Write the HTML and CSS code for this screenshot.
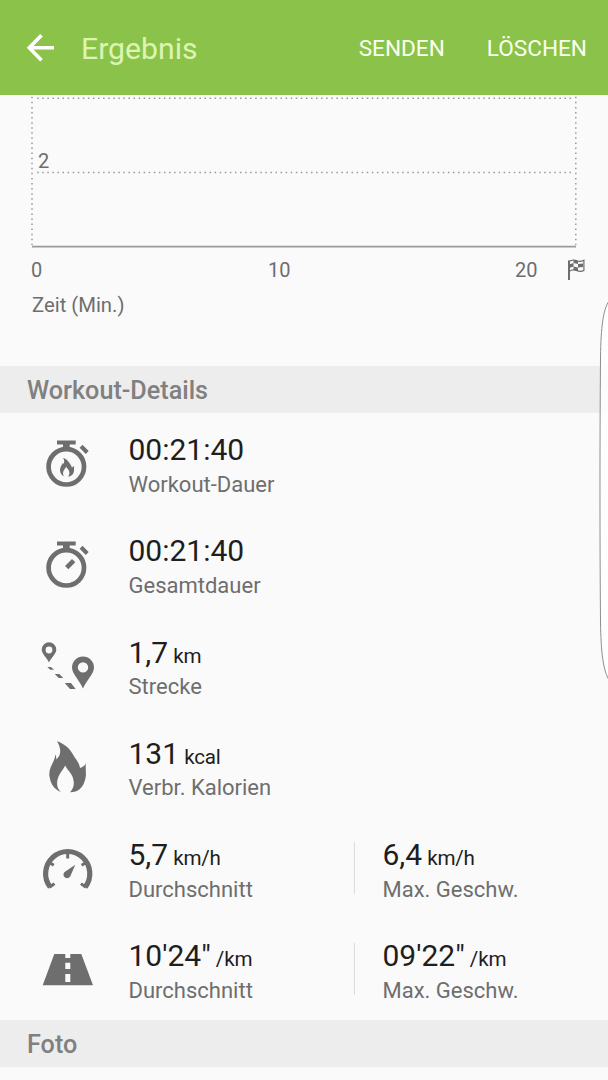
FILE: index.html
```html
<!DOCTYPE html>
<html lang="de">
<head>
	<meta charset="utf-8">
	<title>Ergebnis</title>
	<link rel="stylesheet" href="styles.css">
</head>
<body>
<div class="page">
	<header class="header">
		<svg class="back" width="28" height="28" viewBox="0 0 28 28">
			<path d="M14.5 1.2L2.3 13.7l12.2 12.5M2.5 13.7H27" />
		</svg>
		<h1>Ergebnis</h1>
		<a class="send">SENDEN</a>
		<a class="delete">LÖSCHEN</a>
	</header>

	<!-- Diagramm -->
	<div class="chart">
		<div class="plot">
			<svg width="548" height="153" viewBox="0 0 548 153">
				<path class="dots" d="M7.2 3.3H542M7.2 77.5H542" />
				<path class="dots" d="M2 1.8V150M545.8 1.8V150" />
				<path class="axis" d="M2 151.6H546" />
			</svg>
			<span class="value">2</span>
		</div>
		<div class="ticks">
			<span>0</span>
			<span>10</span>
			<span>20</span>
			<svg class="flag" width="18" height="22" viewBox="0 0 18 22">
				<path class="pole" d="M2 1.5V21" />
				<path class="cloth" d="M2 2.6C5 .4 8 1 10 1.8S14 2.8 16.9 1.2V11.4C14 13 12 12.4 10 11.6S5 10.4 2 12.4" />
				<path d="M6.5 1.2L11 2v3l-4.5-1zM2 5.5l4.5-1.4v3.4L2 9zM11 5l5-.5v3.6L11 8.5zM6.5 7.5L11 8.5v3.4l-4.5-1z" />
			</svg>
		</div>
		<p class="unit">Zeit (Min.)</p>
	</div>

	<h2>Workout-Details</h2>
	<ul class="details">
		<li>
			<svg class="icon" viewBox="0 0 60 60">
				<circle class="ring" cx="28.3" cy="29.8" r="17.7" />
				<path d="M19 3.5h18.7v4h-6V12H25V7.5h-6zM44.5 7.8l6.2 6.2-2.9 2.9-6.2-6.2z" />
				<path transform="translate(17.65 20.3) scale(.385 .367)" d="M19 1.3C27 4 32 9 35 14.5C38 20 41 22 42 27.9Q46 27 48 23.3C47 29 49 34 47 40C45 48 40 52 32 52.3C36 48 37 43 34.3 36.3C32 31 29 30 27.3 25.6C25 30 22 33 20.3 37C18 43 19 49 23 52C15 49 12 42 11.3 35C11 26 17 22 17.3 14.6Q18.7 17 18 19.6C24 15 23 8 19 1.3z" />
			</svg>
			<div class="item">
				<strong>00:21:40</strong>
				<span>Workout-Dauer</span>
			</div>
		</li>
		<li>
			<svg class="icon" viewBox="0 0 60 60">
				<circle class="ring" cx="28.3" cy="29.8" r="17.7" />
				<path d="M19 3.5h18.7v4h-6V12H25V7.5h-6zM44.5 7.8l6.2 6.2-2.9 2.9-6.2-6.2zM34 21l3.3 3.3-7 7-3.3-3.3z" />
			</svg>
			<div class="item">
				<strong>00:21:40</strong>
				<span>Gesamtdauer</span>
			</div>
		</li>
		<li>
			<svg class="icon" viewBox="0 0 60 60">
				<path fill-rule="evenodd" d="M11 23.6C9 19 3.7 15 3.7 10.6a7.3 7.3 0 0 1 14.6 0C18.3 15 13 19 11 23.6zM11 7.6a3.4 3.4 0 1 0 0 6.8a3.4 3.4 0 1 0 0-6.8z" />
				<path fill-rule="evenodd" d="M45 49.6C42 42 34 35 34 28.6a11 11 0 0 1 22 0C56 35 48 42 45 49.6zM45 23.2a5.2 5.2 0 1 0 0 10.4a5.2 5.2 0 1 0 0-10.4z" />
				<path d="M9.3 27.9H13l3 2.8h-3.7zM16.7 34.9h4.6l4 4h-4.6zM26.7 43.9H33l4.7 6H32z" />
			</svg>
			<div class="item">
				<strong>1,7 <small>km</small></strong>
				<span>Strecke</span>
			</div>
		</li>
		<li>
			<svg class="icon" viewBox="0 0 60 60">
				<path d="M19 1.3C27 4 32 9 35 14.5C38 20 41 22 42 27.9Q46 27 48 23.3C47 29 49 34 47 40C45 48 40 52 32 52.3C36 48 37 43 34.3 36.3C32 31 29 30 27.3 25.6C25 30 22 33 20.3 37C18 43 19 49 23 52C15 49 12 42 11.3 35C11 26 17 22 17.3 14.6Q18.7 17 18 19.6C24 15 23 8 19 1.3z" />
			</svg>
			<div class="item">
				<strong>131 <small>kcal</small></strong>
				<span>Verbr. Kalorien</span>
			</div>
		</li>
		<li>
			<svg class="icon" viewBox="0 0 60 60">
				<path class="arc" d="M12.2 45.1A22.1 22.1 0 1 1 47.2 45.1" />
				<path class="mark" d="M29.7 11v5.5M12.5 21.2l3.3 2M46.9 21.2l-3.3 2M11.5 45.2l5-3.6M47.9 45.2l-5-3.6" />
				<path d="M37.3 22.7L32.4 34A3.6 3.6 0 1 1 26.6 30z" />
			</svg>
			<div class="item">
				<strong>5,7 <small>km/h</small></strong>
				<span>Durchschnitt</span>
			</div>
			<div class="item max">
				<strong>6,4 <small>km/h</small></strong>
				<span>Max. Geschw.</span>
			</div>
		</li>
		<li>
			<svg class="icon" viewBox="0 0 60 60">
				<path fill-rule="evenodd" d="M16.3 11h11v4h5v-4h11L55 42.3H4.7zM27.3 19.7v6.3h5v-6.3zM27.3 31v8h5v-8z" />
			</svg>
			<div class="item">
				<strong>10'24" <small>/km</small></strong>
				<span>Durchschnitt</span>
			</div>
			<div class="item max">
				<strong>09'22" <small>/km</small></strong>
				<span>Max. Geschw.</span>
			</div>
		</li>
	</ul>
	<h2>Foto</h2>

	<!-- Griff am rechten Rand, liegt über dem Inhalt -->
	<svg class="edge" width="10" height="384" viewBox="0 0 10 384">
		<path d="M11 4C5 13 3 30 2.5 60C1.8 150 1.8 240 2.5 325C3 355 5 373 11 383" />
	</svg>
</div>
</body>
</html>
```
FILE: styles.css
```css
* {
	margin: 0;
	padding: 0;
	box-sizing: border-box;
}
body {
	background-color: #fafafa;
	font-family: Roboto, "Liberation Sans", sans-serif;
	color: #6e6e6e;
}
.page {
	position: relative;
	width: 608px;
	height: 1080px;
	overflow: hidden;
}
.header {
	display: flex;
	align-items: center;
	height: 95px;
	padding: 0 21px 0 27px;
	background-color: #8bc34a;
	color: #fafff0;
}
.back {
	fill: none;
	stroke: #fff;
	stroke-width: 3.6;
}
.header h1 {
	flex: 1;
	padding: 2px 0 0 26px;
	font-size: 30.2px;
	font-weight: 400;
	color: #dcf5b5;
}
.header a {
	padding-top: 2px;
	font-size: 22.6px;
}
.header .delete {
	margin-left: 42px;
}
.chart {
	height: 270.5px;
	padding-left: 30px;
}
.plot {
	position: relative;
	height: 153px;
}
.plot svg {
	display: block;
}
.dots {
	fill: none;
	stroke: #999;
	stroke-width: 1.5;
	stroke-dasharray: 1.5 3.57;
}
.axis {
	stroke: #999;
	stroke-width: 1.8;
}
.value {
	position: absolute;
	left: 8px;
	top: 54px;
	font-size: 20px;
	line-height: 24px;
}
.ticks {
	display: grid;
	grid-template-columns: 237px 247px 52px 18px;
	align-items: center;
	height: 44px;
	padding-left: 1px;
	font-size: 20px;
}
.flag {
	fill: #6e6e6e;
}
.flag .pole,
.flag .cloth {
	fill: none;
	stroke: #6e6e6e;
	stroke-width: 1.2;
}
.flag .pole {
	stroke-width: 2;
}
.unit {
	padding-left: 2px;
	font-size: 20.3px;
	line-height: 27px;
}
h2 {
	height: 47px;
	padding-left: 27px;
	background-color: #ededed;
	font-size: 25.2px;
	font-weight: 500;
	line-height: 50px;
	color: #808080;
}
.details {
	list-style: none;
}
.details li {
	display: flex;
	height: 101.27px;
	padding: 24px 0 0 38px;
}
.icon {
	width: 60px;
	height: 60px;
	margin-right: 30.5px;
	fill: #6e6e6e;
}
.ring,
.arc,
.mark {
	fill: none;
	stroke: #6e6e6e;
	stroke-width: 4.7;
}
.arc {
	stroke-width: 5.2;
}
.mark {
	stroke-width: 3;
}
.item {
	width: 225.5px;
	height: 52px;
}
.item strong {
	display: block;
	height: 30px;
	margin-top: -4.5px;
	font-size: 30px;
	font-weight: 400;
	line-height: 36px;
	color: #1e1e1e;
}
.item small {
	margin-left: -2.4px;
	font-size: 20.6px;
	letter-spacing: -.2px;
}
.item span {
	display: block;
	padding-top: 8.5px;
	font-size: 22px;
	line-height: 28px;
}
.item.max {
	padding-left: 27.5px;
	border-left: 1px solid #dcdcdc;
}
.edge {
	position: absolute;
	right: 0;
	top: 297px;
	fill: rgba(255, 255, 255, .8);
	stroke: #8e8e8e;
	stroke-width: 1;
}
```
